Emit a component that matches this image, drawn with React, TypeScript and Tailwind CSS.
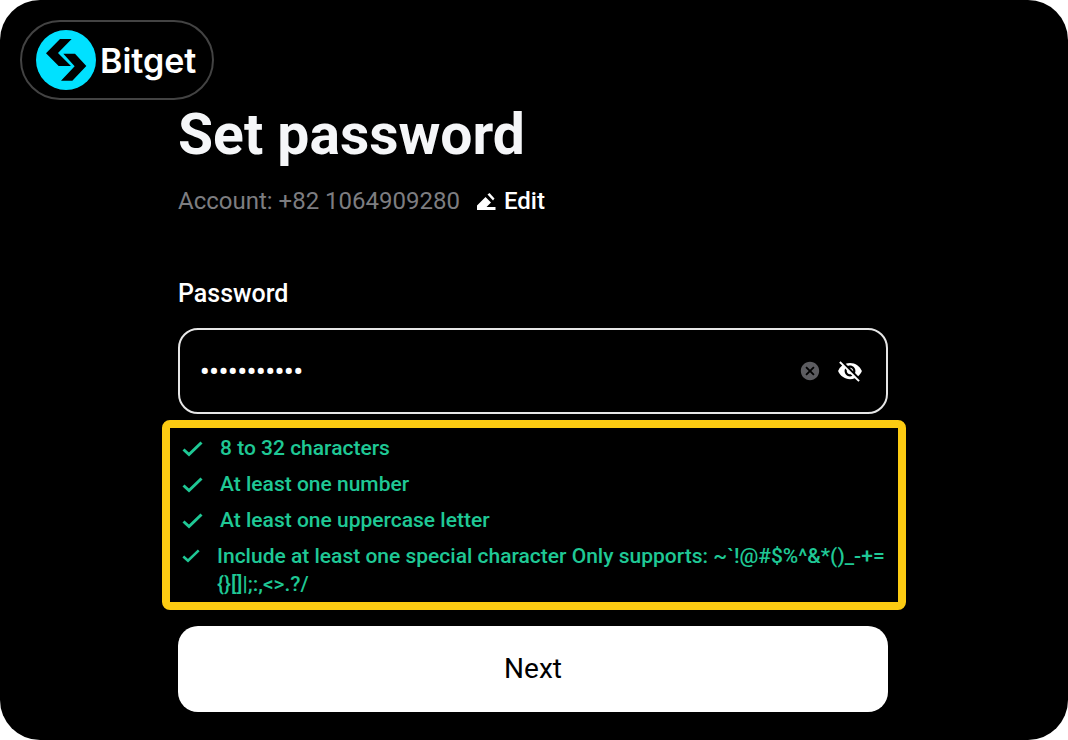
import { useState } from "react";
import { MdCancel, MdVisibilityOff } from "react-icons/md";

const rules = [
  { id: "length", text: "8 to 32 characters" },
  { id: "number", text: "At least one number" },
  { id: "uppercase", text: "At least one uppercase letter" },
];

function BitgetLogo() {
  return (
    <div className="inline-flex h-20 items-center gap-1 rounded-full border-2 border-[#434343] pr-4 pl-3.5">
      <svg viewBox="108 90 180 180" className="size-15" aria-hidden="true">
        <circle cx="198" cy="180" r="90" fill="#00e1ff" />
        <path d="M180 117h35l-41 42 39 39h-37l-38-38z" fill="#000" />
        <path d="M190 161h35l34 37-42 44h-34l41-43z" fill="#000" />
      </svg>
      <span className="font-['Inter',sans-serif] text-[34px] font-semibold text-white">Bitget</span>
    </div>
  );
}

function PencilIcon() {
  return (
    <svg viewBox="0 0 20 20" className="size-5" fill="currentColor" aria-hidden="true">
      <path d="M1 19V14.500L9.500 6l5.500 5.500L10.500 16H19.500V19z" />
      <path d="M11.500 3.500l2-1.500 5 5.500-1.500 2z" />
    </svg>
  );
}

function CheckIcon({ className }: { className: string }) {
  return (
    <svg viewBox="0 0 21 18" className={className} fill="none" stroke="currentColor" strokeWidth="3" aria-hidden="true">
      <path d="M1.500 9.500L7 14.500 19.500 2.500" />
    </svg>
  );
}

export default function App() {
  const [password, setPassword] = useState("Bitget#2024");
  const [visible, setVisible] = useState(false);

  return (
    <div className="bg-white">
      <div className="min-h-screen rounded-[40px] bg-black font-['Roboto',sans-serif] text-white">
        <header className="flex px-5 pt-5">
          <BitgetLogo />
        </header>

        <main className="mx-auto max-w-[712px] pr-0.5 pb-7">
          <h1 className="text-[57px] leading-[70px] font-bold text-[#f5f6f8]">Set password</h1>
          <div className="mt-[15px] flex items-center gap-4 text-2xl">
            <p className="text-[#7d7d80]">Account: +82 1064909280</p>
            <button type="button" className="flex items-center gap-2 font-medium">
              <PencilIcon />
              Edit
            </button>
          </div>

          <form onSubmit={(e) => e.preventDefault()}>
            <label htmlFor="password" className="mt-[61px] block text-[25px] leading-8 font-medium">
              Password
            </label>
            <div className="mt-[18px] flex h-[86px] items-center rounded-[20px] border-2 border-[#e6e6e6] pr-[23px] pl-5">
              <input
                id="password"
                type={visible ? "text" : "password"}
                value={password}
                onChange={(e) => setPassword(e.target.value)}
                className="min-w-0 flex-1 bg-transparent text-[26px] font-bold outline-none"
              />
              <button type="button" aria-label="Clear password" onClick={() => setPassword("")}>
                <MdCancel className="size-[22px] text-[#5c5c60]" />
              </button>
              <button type="button" aria-label="Toggle visibility" className="ml-4" onClick={() => setVisible(!visible)}>
                <MdVisibilityOff className="size-[26px]" />
              </button>
            </div>

            <ul className="-mr-[18px] -ml-4 mt-1.5 flex flex-col gap-2 rounded-lg border-8 border-[#fccb12] px-3 pt-1.5 pb-1 text-[21px] leading-7 font-medium text-[#1fc895]">
              {rules.map((rule) => (
                <li key={rule.id} className="flex gap-[17px]">
                  <CheckIcon className="mt-1.5 h-[18px] w-[21px] shrink-0" />
                  {rule.text}
                </li>
              ))}
              <li className="flex gap-[17px]">
                <CheckIcon className="mt-1.5 h-4 w-[18px] shrink-0" />
                <span>
                  Include at least one special character Only supports: {"~`!@#$%^&*()_-+="}
                  <br />
                  {"{}[]|;:,<>.?/"}
                </span>
              </li>
            </ul>

            <button type="submit" className="mt-4 h-[86px] w-full rounded-[20px] bg-white text-[28px] text-black">
              Next
            </button>
          </form>
        </main>
      </div>
    </div>
  );
}
